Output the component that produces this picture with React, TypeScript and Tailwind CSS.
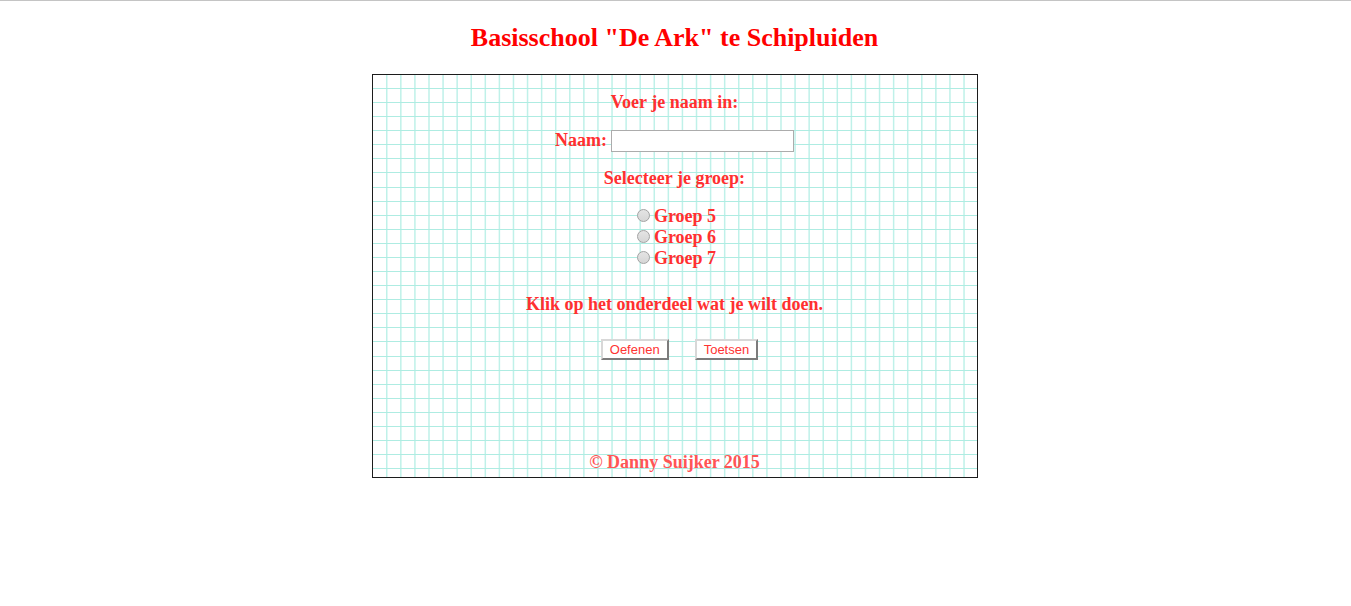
import React from "react";

const GRID_STEP = 14.08;
const columns = Array.from({ length: 42 }, (_, i) => 13.75 + i * GRID_STEP);
const rows = Array.from({ length: 28 }, (_, i) => Math.round(13 + i * GRID_STEP));

function GridPaper() {
  return (
    <svg className="absolute inset-0 h-full w-full" aria-hidden="true">
      {columns.map((x) => (
        <rect key={x} x={x - 0.75} y="0" width="1.5" height="100%" fill="#bff1e9" />
      ))}
      {rows.map((y) => (
        <rect key={y} x="0" y={y} width="100%" height="1" fill="#aeece2" />
      ))}
    </svg>
  );
}

const groups = ["Groep 5", "Groep 6", "Groep 7"];

const buttonStyle =
  "h-[21px] border-2 border-t-[#d8d8d8] border-l-[#d8d8d8] border-r-[#7c7c7c] border-b-[#7c7c7c] bg-white px-[7px] font-['Liberation_Sans',Arial,sans-serif] text-[13px] leading-[17px] font-normal text-[#ff3333]";

export default function App() {
  return (
    <div className="border-t border-[#c4c4c4] bg-white pr-[2px] font-['Liberation_Serif','Times_New_Roman',serif]">
      <h1 className="pt-[22px] text-center text-[26px] leading-[30px] font-bold text-[#ff0000]">
        Basisschool "De Ark" te Schipluiden
      </h1>
      <main className="relative mx-auto mt-[21px] w-full max-w-[606px] border border-[#1c1c1c] text-center text-[18px] leading-[21px] font-bold text-[#ff3030]">
        <GridPaper />
        <form className="relative flex flex-col items-center pt-[17px] pb-1" onSubmit={(e) => e.preventDefault()}>
          <p>Voer je naam in:</p>
          <div className="mt-[17px] flex items-start gap-1">
            <label htmlFor="naam">Naam:</label>
            <input
              id="naam"
              name="naam"
              type="text"
              className="h-[22px] w-[183px] border border-[#acacac] bg-white px-1 text-[14px] font-normal outline-none"
            />
          </div>
          <fieldset className="mt-4">
            <legend className="text-center">Selecteer je groep:</legend>
            <div className="mt-[17px] flex flex-col items-center pl-1">
              {groups.map((group) => (
                <label key={group} className="flex items-center gap-1">
                  <input
                    type="radio"
                    name="groep"
                    value={group}
                    className="mb-[3px] h-[13px] w-[13px] appearance-none rounded-full border border-[#a2a2a2] bg-linear-to-b from-[#e4e4e4] to-[#d6d6d6] checked:bg-[#777777]"
                  />
                  {group}
                </label>
              ))}
            </div>
          </fieldset>
          <p className="mt-[25px]">Klik op het onderdeel wat je wilt doen.</p>
          <div className="mt-6 flex gap-[26px] pl-[10px]">
            <button type="submit" className={buttonStyle}>
              Oefenen
            </button>
            <button type="submit" className={buttonStyle}>
              Toetsen
            </button>
          </div>
          <footer className="mt-[92px] text-[#ff5555]">© Danny Suijker 2015</footer>
        </form>
      </main>
    </div>
  );
}
